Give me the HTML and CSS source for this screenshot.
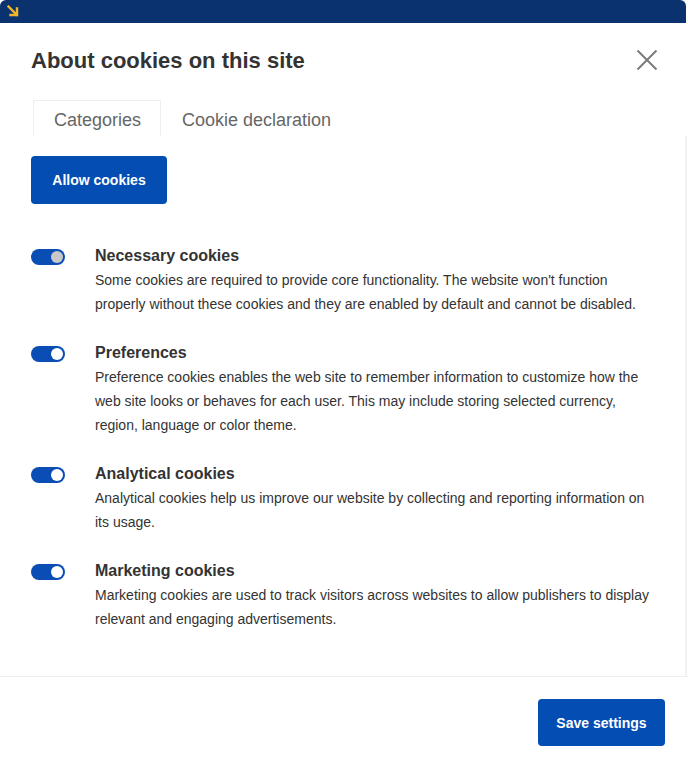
FILE: index.html
```html
<!DOCTYPE html>
<html lang="en">
<head>
<meta charset="utf-8">
<title>About cookies on this site</title>
<link rel="stylesheet" href="styles.css">
</head>
<body>
<div class="topbar">
  <svg class="arrow" width="12" height="12" viewBox="0 0 12 12" aria-hidden="true">
    <path d="M1.5 1.5 L10 10 M3.5 10 H10 V3.5" fill="none" stroke="#f2b529" stroke-width="2.4" stroke-linecap="square"/>
  </svg>
</div>
<div class="modal">
  <div class="header">
    <h1 class="title">About cookies on this site</h1>
    <button class="close" aria-label="Close">
      <svg width="22" height="22" viewBox="0 0 22 22"><path d="M1.5 1.5 L20.5 20.5 M20.5 1.5 L1.5 20.5" stroke="#7b7b7b" stroke-width="2" fill="none"/></svg>
    </button>
  </div>
  <div class="tabs">
    <div class="tab active">Categories</div>
    <div class="tab">Cookie declaration</div>
  </div>
  <div class="panel">
    <button class="btn allow">Allow cookies</button>
    <div class="items">
      <div class="item">
        <span class="toggle disabled"><span class="knob"></span></span>
        <div class="text">
          <div class="name">Necessary cookies</div>
          <p class="desc">Some cookies are required to provide core functionality. The website won't function properly without these cookies and they are enabled by default and cannot be disabled.</p>
        </div>
      </div>
      <div class="item">
        <span class="toggle"><span class="knob"></span></span>
        <div class="text">
          <div class="name">Preferences</div>
          <p class="desc">Preference cookies enables the web site to remember information to customize how the web site looks or behaves for each user. This may include storing selected currency, region, language or color theme.</p>
        </div>
      </div>
      <div class="item">
        <span class="toggle"><span class="knob"></span></span>
        <div class="text">
          <div class="name">Analytical cookies</div>
          <p class="desc">Analytical cookies help us improve our website by collecting and reporting information on its usage.</p>
        </div>
      </div>
      <div class="item">
        <span class="toggle"><span class="knob"></span></span>
        <div class="text">
          <div class="name">Marketing cookies</div>
          <p class="desc">Marketing cookies are used to track visitors across websites to allow publishers to display relevant and engaging advertisements.</p>
        </div>
      </div>
    </div>
  </div>
  <div class="footer">
    <button class="btn save">Save settings</button>
  </div>
</div>
</body>
</html>
```
FILE: styles.css
```css
* { box-sizing: border-box; }
html, body { margin: 0; padding: 0; background: #fff; }
body {
  font-family: "Liberation Sans", Arial, sans-serif;
  color: #333;
  width: 688px;
  height: 763px;
  overflow: hidden;
}
.topbar {
  width: 686px;
  height: 23px;
  background: #0a326f;
  border-radius: 6px 6px 0 0;
  padding: 5px 0 0 7px;
}
.arrow { display: block; }
.modal { width: 688px; }
.header {
  display: flex;
  align-items: flex-start;
  justify-content: space-between;
  padding: 26px 30px 0 31px;
  height: 77px;
}
.title {
  margin: 0;
  font-size: 22px;
  font-weight: 700;
  color: #333;
  line-height: 24px;
}
.close {
  border: 0;
  background: none;
  padding: 0;
  width: 22px;
  height: 22px;
  margin-top: 0;
}
.close svg { display: block; }
.tabs {
  display: flex;
  padding-left: 33px;
  height: 36px;
}
.tab {
  font-size: 18px;
  color: #666;
  padding: 0 20px;
  line-height: 38px;
  height: 36px;
  border: 1px solid transparent;
  border-bottom: 0;
}
.tab.active {
  border-color: #eeeeee;
  width: 128px;
  text-align: center;
}
.panel {
  border-right: 2px solid #f1f1f1;
  width: 687px;
  padding: 20px 30px 45px 31px;
}
.btn {
  font-family: "Liberation Sans", Arial, sans-serif;
  background: #034db3;
  color: #fff;
  border: 0;
  border-radius: 4px;
  font-size: 14px;
  font-weight: 700;
  display: block;
}
.allow { width: 136px; height: 48px; }
.items {
  display: flex;
  flex-direction: column;
  gap: 25px;
  margin-top: 40px;
}
.item { display: flex; align-items: flex-start; }
.toggle {
  flex: none;
  width: 34px;
  height: 16px;
  margin-top: 5px;
  margin-right: 30px;
  background: #0a4db4;
  border-radius: 8px;
  position: relative;
}
.knob {
  position: absolute;
  top: 2px;
  right: 2px;
  width: 12px;
  height: 12px;
  border-radius: 50%;
  background: #fff;
}
.toggle.disabled .knob { background: #c8c8c8; }
.text { flex: 1; }
.name {
  font-size: 16px;
  font-weight: 700;
  line-height: 24px;
  color: #333;
}
.desc {
  margin: 0;
  font-size: 14px;
  line-height: 24px;
  color: #333;
}
.footer {
  border-top: 1px solid #eeeeee;
  display: flex;
  justify-content: flex-end;
  padding: 22px 23px 0 0;
}
.save { width: 127px; height: 47px; }
```
